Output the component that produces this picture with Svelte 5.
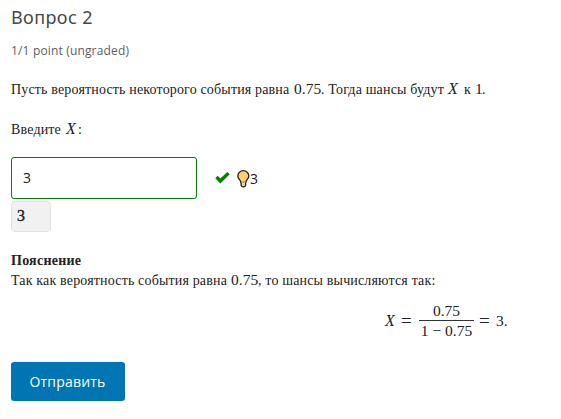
<script>
  const value = '3';
</script>

<main>
  <h3>Вопрос 2</h3>
  <div class="progress">1/1 point (ungraded)</div>
  <p class="question"><span class="run a">Пусть вероятность некоторого события равна</span><span class="run num">0.75</span><span class="run b">. Тогда шансы будут</span><i class="run x">X</i><span class="run k">к</span><span class="run one">1</span>.</p>
  <p class="prompt"><span class="run c">Введите</span><i class="run x2">X</i>:</p>
  <div class="answer">
    <input type="text" {value} aria-label="X" />
    <svg class="check" width="15" height="12" viewBox="0 0 15 12"><path d="M0.3 6.2 2.6 3.8 5.4 6.6 12.3 0 14.7 2.3 5.4 11.6Z" fill="#008100" /></svg>
    <svg class="bulb" width="13" height="18" viewBox="0 0 13 18">
      <path d="M3.8 12.2C3.7 10 .8 9 .8 5.9a5.5 5.2 0 0 1 11 0C11.8 9 8.900 10 8.800 12.200Z" fill="#ffd172" stroke="#222" stroke-width="1.3" />
      <path d="M4.100 12.200h4.500v2.900q-.3 1.800-2.250 1.800T4.100 15.100Z" fill="#d5d5d5" stroke="#222" stroke-width="1.300" />
      <path d="M4.300 12h4.100" stroke="#ffc14d" stroke-width="1.6" />
    </svg>
    <span class="result">3</span>
  </div>
  <div class="preview">3</div>
  <section>
    <strong>Пояснение</strong>
    <p><span class="run d">Так как вероятность события равна</span><span class="run num">0.75</span><span class="run e">, то шансы вычисляются так:</span></p>
  </section>
  <div class="formula">
    <i>X</i><span class="eq">=</span>
    <span class="frac"><span class="top">0.75</span><span class="bottom">1 − 0.75</span></span>
    <span class="eq">=</span><span class="end">3.</span>
  </div>
  <button type="button">Отправить</button>
</main>

<style>
  :global(body) { background: #fff; }
  main {
    box-sizing: border-box;
    width: 561px;
    height: 419px;
    padding-left: 11px;
    overflow: hidden;
    display: flex;
    flex-direction: column;
    align-items: flex-start;
    color: #222;
    font: 14px/20px "Liberation Serif", serif;
    letter-spacing: 0.16px;
  }
  h3 { margin: 6px 0 0; font: 400 18px/22px "Noto Sans", sans-serif; letter-spacing: 0.4px; color: #474747; }
  .progress { margin-top: 13px; font: 12px/20px "Open Sans", sans-serif; color: #5e5e5e; }
  p { margin: 0; height: 20px; white-space: nowrap; }
  .question { margin-top: 18px; }
  .prompt { margin-top: 20px; }
  .run { display: inline-block; line-height: 20px; }
  .a { width: 283px; }
  .num { width: 27px; font-size: 15.5px; letter-spacing: 0; }
  .b { width: 127px; }
  .x { width: 16px; font-size: 16px; }
  .k { width: 11px; }
  .one { width: 7px; font-size: 15.5px; }
  .c { width: 55px; }
  .x2 { width: 12px; font-size: 16px; }
  .d { width: 220px; }
  .answer { margin-top: 18px; display: flex; align-items: center; height: 42px; }
  input {
    box-sizing: border-box;
    width: 186px;
    height: 42px;
    padding: 0 12px 2px 11px;
    border: 1px solid #008100;
    border-radius: 3px;
    background: #fff;
    color: #222;
    font: 14px "Open Sans", sans-serif;
  }
  .check { margin: 0 0 1px 18px; }
  .bulb { margin: 1px 0 0 7px; }
  .result { margin: 2px 0 0; font: 14px/20px "Open Sans", sans-serif; }
  .preview {
    box-sizing: border-box;
    width: 40px;
    height: 31px;
    margin-top: 2px;
    padding-left: 5px;
    border: 1px solid #e3e3e3;
    border-radius: 4px;
    background: #f1f1f1;
    font-size: 16px;
    line-height: 28px;
    -webkit-text-stroke: 0.4px #222;
  }
  section { margin-top: 19px; }
  strong { display: block; height: 19px; letter-spacing: 0.25px; }
  .formula { display: flex; align-items: center; height: 38px; margin: 12px 0 0 374px; font-size: 15.5px; letter-spacing: 0; }
  .formula i { width: 16px; font-size: 16px; }
  .eq { width: 18px; font-size: 19px; }
  .frac { width: 55px; margin-right: 5px; text-align: center; white-space: nowrap; }
  .top, .bottom { display: block; height: 19px; line-height: 19px; }
  .top { height: 18px; line-height: 17px; border-bottom: 1px solid #333; }
  .end { margin-left: -1px; }
  button {
    width: 114px;
    height: 39px;
    margin-top: 22px;
    padding: 0 1px 0 0;
    border: 0;
    border-radius: 3px;
    background: #0075b4;
    color: #fff;
    font: 14px "Open Sans", sans-serif;
    letter-spacing: 0.2px;
  }
</style>
